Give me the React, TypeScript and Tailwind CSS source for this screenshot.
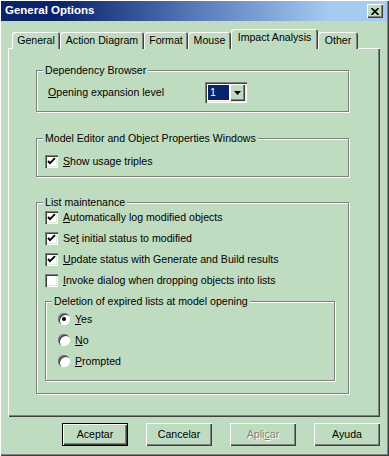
import type { ReactNode } from 'react';

const raised =
  'shadow-[inset_1px_1px_0_#ffffff,inset_-1px_-1px_0_#404040,inset_-2px_-2px_0_#808080]';
const sunken =
  'shadow-[inset_1px_1px_0_#808080,inset_2px_2px_0_#404040,inset_-1px_-1px_0_#ffffff,inset_-2px_-2px_0_#dfe9df]';

function Key({ children }: { children: ReactNode }) {
  return <span className="underline underline-offset-[1px] decoration-1">{children}</span>;
}

function Group({
  title,
  className,
  children,
}: {
  title: string;
  className: string;
  children: ReactNode;
}) {
  return (
    <div
      className={`relative border border-[#808080] shadow-[1px_1px_0_#ffffff,inset_1px_1px_0_#ffffff] ${className}`}
    >
      <span className="absolute -top-[8px] left-[6px] bg-[#c0dcc0] px-[2px] leading-[14px] whitespace-nowrap">
        {title}
      </span>
      {children}
    </div>
  );
}

function CheckBox({ checked, children }: { checked: boolean; children: ReactNode }) {
  return (
    <div className="flex h-[13px] items-center gap-[5px]">
      <div className={`h-[13px] w-[13px] shrink-0 bg-white ${sunken} flex items-center justify-center`}>
        {checked && (
          <svg width="13" height="13" viewBox="0 0 13 13" aria-hidden="true">
            <path d="M3 6 L5 8.2 L10 3.2" fill="none" stroke="#000" strokeWidth="1.9" />
          </svg>
        )}
      </div>
      <span className="leading-[13px] whitespace-nowrap">{children}</span>
    </div>
  );
}

function Radio({ checked, children }: { checked: boolean; children: ReactNode }) {
  return (
    <div className="flex h-[12px] items-center gap-[5px]">
      <div className="relative h-[12px] w-[12px] shrink-0 rounded-full bg-white shadow-[inset_1px_1px_0_#808080,inset_2px_2px_0_#404040,inset_-1px_-1px_0_#ffffff] flex items-center justify-center">
        {checked && <div className="h-[4px] w-[4px] rounded-full bg-black" />}
      </div>
      <span className="leading-[13px] whitespace-nowrap">{children}</span>
    </div>
  );
}

function Tab({ label, width, active = false }: { label: string; width: string; active?: boolean }) {
  return (
    <div
      className={`flex items-center justify-center rounded-t-[3px] bg-[#c0dcc0] whitespace-nowrap shadow-[inset_1px_1px_0_#ffffff,inset_-1px_0_0_#404040,inset_-2px_0_0_#808080] ${width} ${
        active ? 'h-[20px] pb-[3px]' : 'h-[17px]'
      }`}
    >
      {label}
    </div>
  );
}

function Button({ children, isDefault = false, disabled = false }: { children: ReactNode; isDefault?: boolean; disabled?: boolean }) {
  return (
    <div
      className={`flex h-[23px] w-[66px] items-center justify-center bg-[#c0dcc0] ${
        isDefault ? 'border border-black' : ''
      } ${raised} ${disabled ? 'text-[#808080] [text-shadow:1px_1px_0_#ffffff]' : ''}`}
    >
      {children}
    </div>
  );
}

export default function App() {
  return (
    <div className="h-[456px] w-[389px] bg-[#c0dcc0] px-[1px] pt-[1px] font-['Liberation_Sans',Arial,sans-serif] text-[10.6px] text-black shadow-[inset_1px_1px_0_#ffffff,inset_-1px_-1px_0_#404040,inset_-2px_-2px_0_#808080]">
      {/* Title bar */}
      <div className="flex h-[20px] w-[386px] items-center justify-between bg-linear-to-r from-[#0a246a] from-15% via-[#5878b8] via-50% to-[#a6caf0] to-85% pl-[4px] pr-[4px]">
        <span className="text-[11.5px] font-bold text-white">General Options</span>
        <div className={`flex h-[14px] w-[16px] items-center justify-center bg-[#c0dcc0] ${raised}`}>
          <svg width="8" height="7" viewBox="0 0 8 7" aria-hidden="true">
            <path d="M0.5 0 L7.5 7 M7.5 0 L0.5 7" stroke="#000" strokeWidth="1.6" />
          </svg>
        </div>
      </div>

      {/* Tabs */}
      <div className="relative z-10 mt-[8px] flex h-[20px] items-end pl-[11px]">
        <Tab label="General" width="w-[48px]" />
        <Tab label="Action Diagram" width="w-[84px]" />
        <Tab label="Format" width="w-[44px]" />
        <Tab label="Mouse" width="w-[43px]" />
        <Tab label="Impact Analysis" width="w-[87px]" active />
        <Tab label="Other" width="w-[40px]" />
      </div>

      {/* Panel */}
      <div className={`-mt-[1px] ml-[7px] h-[369px] w-[372px] pl-[28px] pt-[22px] ${raised}`}>
        <Group title="Dependency Browser" className="h-[42px] w-[313px]">
          <div className="flex h-[21px] items-center pl-[11px] mt-[11px]">
            <span className="w-[157px] whitespace-nowrap">
              <Key>O</Key>pening expansion level
            </span>
            <div className={`flex h-[21px] w-[42px] bg-white p-[2px] ${sunken}`}>
              <div className="flex flex-1 items-center border border-white bg-[#0a246a] pl-[2px] text-white">1</div>
              <div className={`flex w-[15px] items-center justify-center bg-[#c0dcc0] ${raised}`}>
                <svg width="7" height="4" viewBox="0 0 7 4" aria-hidden="true">
                  <path d="M0 0 H7 L3.5 4 Z" fill="#000" />
                </svg>
              </div>
            </div>
          </div>
        </Group>

        <Group title="Model Editor and Object Properties Windows" className="mt-[26px] h-[39px] w-[313px]">
          <div className="pl-[8px] pt-[16px]">
            <CheckBox checked>
              <Key>S</Key>how usage triples
            </CheckBox>
          </div>
        </Group>

        <Group title="List maintenance" className="mt-[25px] h-[192px] w-[313px]">
          <div className="flex flex-col gap-[8px] pl-[8px] pt-[8px]">
            <CheckBox checked>
              <Key>A</Key>utomatically log modified objects
            </CheckBox>
            <CheckBox checked>
              Se<Key>t</Key> initial status to modified
            </CheckBox>
            <CheckBox checked>
              <Key>U</Key>pdate status with Generate and Build results
            </CheckBox>
            <CheckBox checked={false}>
              <Key>I</Key>nvoke dialog when dropping objects into lists
            </CheckBox>
          </div>
          <Group title="Deletion of expired lists at model opening" className="ml-[8px] mt-[14px] h-[80px] w-[290px]">
            <div className="flex flex-col gap-[9px] pl-[12px] pt-[11px]">
              <Radio checked>
                <Key>Y</Key>es
              </Radio>
              <Radio checked={false}>
                <Key>N</Key>o
              </Radio>
              <Radio checked={false}>
                <Key>P</Key>rompted
              </Radio>
            </div>
          </Group>
        </Group>
      </div>

      {/* Buttons */}
      <div className="ml-[61px] mt-[6px] flex gap-[18px]">
        <Button isDefault>Aceptar</Button>
        <Button>Cancelar</Button>
        <Button disabled>
          <span>
            Apli<Key>c</Key>ar
          </span>
        </Button>
        <Button>Ayuda</Button>
      </div>
    </div>
  );
}
